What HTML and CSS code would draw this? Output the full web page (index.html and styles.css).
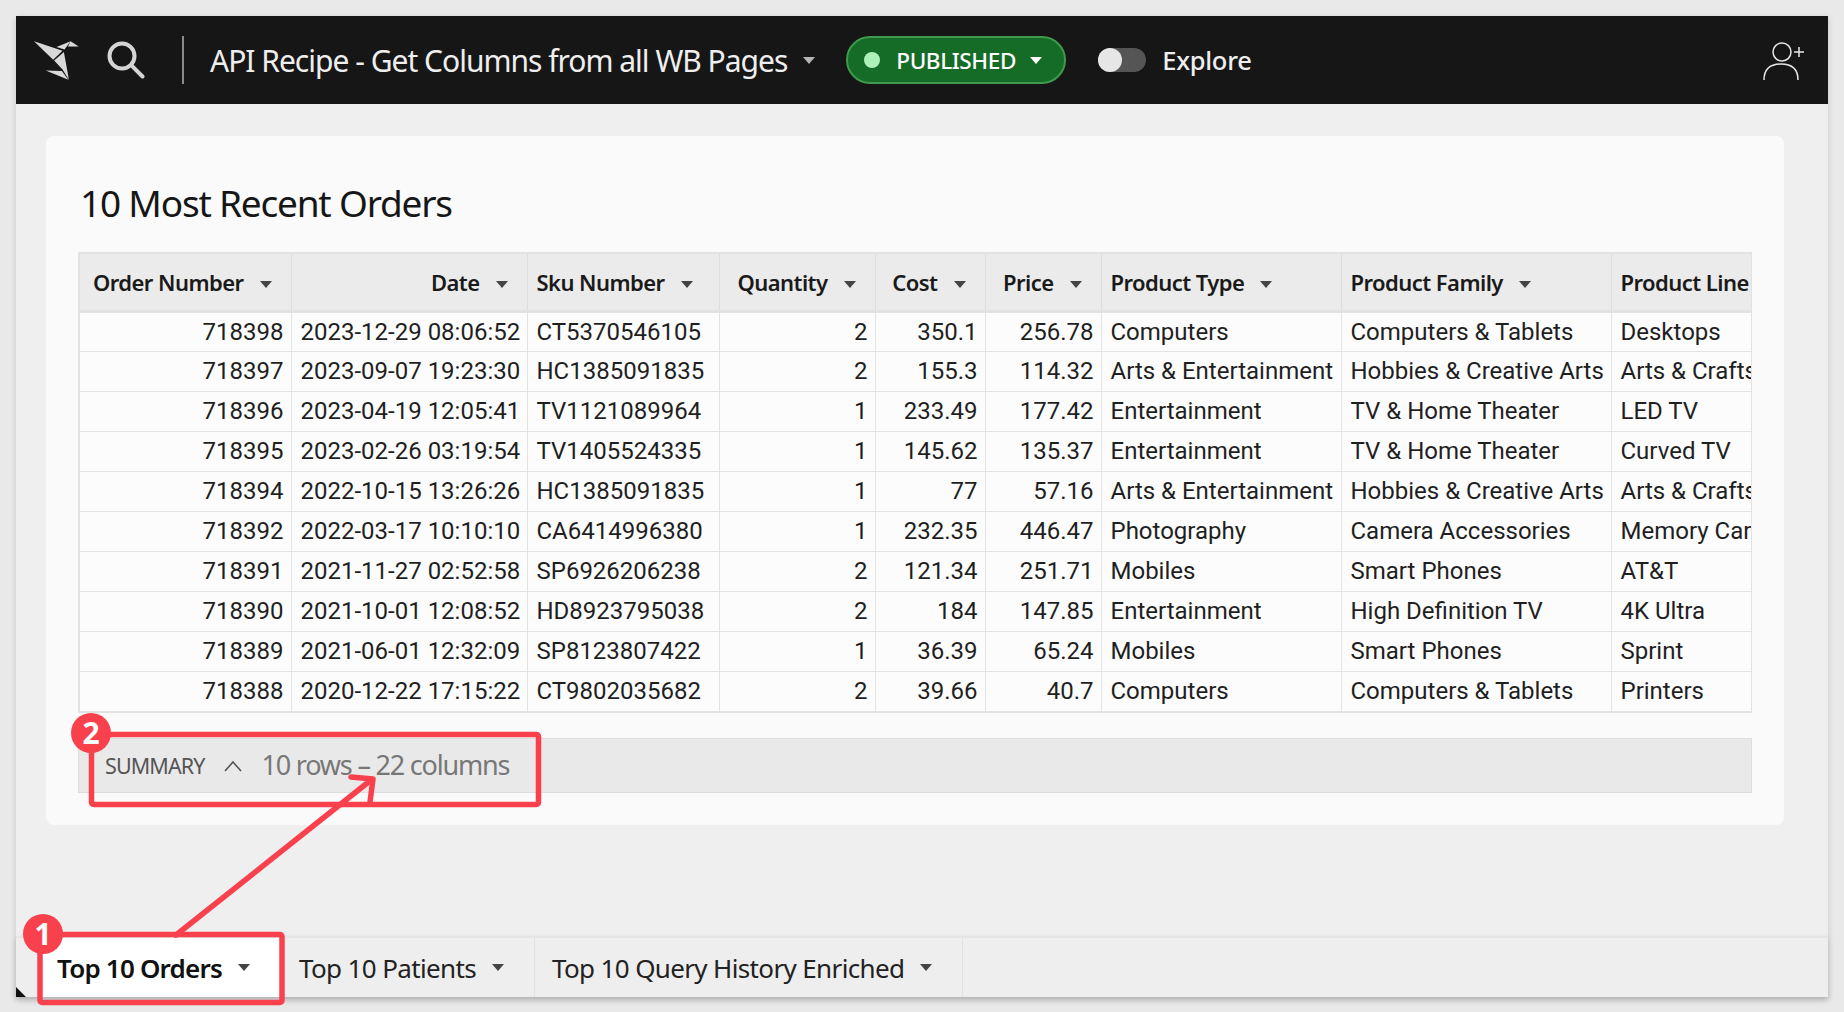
FILE: index.html
```html
<!DOCTYPE html>
<html lang="en">
<head>
    <meta charset="UTF-8">
    <meta name="viewport" content="width=device-width, initial-scale=1.0">
    <title>API Recipe - Get Columns from all WB Pages</title>
    <link rel="stylesheet" href="styles.css">
</head>
<body>
    <div class="window">
        <header class="topbar">
            <svg class="logo" width="47" height="41" viewBox="100 120 140 122">
                <polygon class="logo-fill" points="103,124 188,152 160,179"/>
                <polygon class="logo-fill" points="163,181 192,156 207,238 188,208"/>
                <polygon class="logo-fill" points="170,141 212,124 194,148"/>
                <polygon class="logo-fill" points="212,124 236,139 204,139"/>
                <polygon class="logo-fill" points="138,211 186,212 205,238"/>
            </svg>
            <svg class="search" width="40" height="40" viewBox="0 0 40 40">
                <circle cx="17" cy="15" r="12.5"/>
                <line x1="26.7" y1="24.7" x2="37.5" y2="35.5"/>
            </svg>
            <span class="divider"></span>
            <span class="doc-title">API Recipe - Get Columns from all WB Pages</span>
            <span class="caret caret-light doc-caret"></span>
            <span class="pill">
                <span class="pill-dot"></span>
                <span class="pill-text">PUBLISHED</span>
                <span class="caret caret-white"></span>
            </span>
            <span class="toggle"><span class="knob"></span></span>
            <span class="explore">Explore</span>
            <svg class="user" width="44" height="42" viewBox="0 0 44 42">
                <circle cx="20" cy="13" r="9"/>
                <path d="M2 41 C2 30 8 25 19 25 C30 25 36 30 36 41"/>
                <path d="M32 13 H42 M37 8 V18"/>
            </svg>
        </header>

        <main class="content">
            <section class="card">
                <h1>10 Most Recent Orders</h1>
                <div class="table-wrap">
                    <table>
                        <colgroup>
                            <col class="c1"><col class="c2"><col class="c3"><col class="c4"><col class="c5">
                            <col class="c6"><col class="c7"><col class="c8"><col class="c9">
                        </colgroup>
                        <thead>
                            <tr>
                                <th class="num">Order Number<span class="caret"></span></th>
                                <th class="num">Date<span class="caret"></span></th>
                                <th>Sku Number<span class="caret"></span></th>
                                <th class="num">Quantity<span class="caret"></span></th>
                                <th class="num">Cost<span class="caret"></span></th>
                                <th class="num">Price<span class="caret"></span></th>
                                <th>Product Type<span class="caret"></span></th>
                                <th>Product Family<span class="caret"></span></th>
                                <th>Product Line</th>
                            </tr>
                        </thead>
                        <tbody>
                            <tr><td class="num">718398</td><td class="num">2023-12-29 08:06:52</td><td>CT5370546105</td><td class="num">2</td><td class="num">350.1</td><td class="num">256.78</td><td>Computers</td><td>Computers &amp; Tablets</td><td>Desktops</td></tr>
                            <tr><td class="num">718397</td><td class="num">2023-09-07 19:23:30</td><td>HC1385091835</td><td class="num">2</td><td class="num">155.3</td><td class="num">114.32</td><td>Arts &amp; Entertainment</td><td>Hobbies &amp; Creative Arts</td><td>Arts &amp; Crafts</td></tr>
                            <tr><td class="num">718396</td><td class="num">2023-04-19 12:05:41</td><td>TV1121089964</td><td class="num">1</td><td class="num">233.49</td><td class="num">177.42</td><td>Entertainment</td><td>TV &amp; Home Theater</td><td>LED TV</td></tr>
                            <tr><td class="num">718395</td><td class="num">2023-02-26 03:19:54</td><td>TV1405524335</td><td class="num">1</td><td class="num">145.62</td><td class="num">135.37</td><td>Entertainment</td><td>TV &amp; Home Theater</td><td>Curved TV</td></tr>
                            <tr><td class="num">718394</td><td class="num">2022-10-15 13:26:26</td><td>HC1385091835</td><td class="num">1</td><td class="num">77</td><td class="num">57.16</td><td>Arts &amp; Entertainment</td><td>Hobbies &amp; Creative Arts</td><td>Arts &amp; Crafts</td></tr>
                            <tr><td class="num">718392</td><td class="num">2022-03-17 10:10:10</td><td>CA6414996380</td><td class="num">1</td><td class="num">232.35</td><td class="num">446.47</td><td>Photography</td><td>Camera Accessories</td><td>Memory Cards</td></tr>
                            <tr><td class="num">718391</td><td class="num">2021-11-27 02:52:58</td><td>SP6926206238</td><td class="num">2</td><td class="num">121.34</td><td class="num">251.71</td><td>Mobiles</td><td>Smart Phones</td><td>AT&amp;T</td></tr>
                            <tr><td class="num">718390</td><td class="num">2021-10-01 12:08:52</td><td>HD8923795038</td><td class="num">2</td><td class="num">184</td><td class="num">147.85</td><td>Entertainment</td><td>High Definition TV</td><td>4K Ultra</td></tr>
                            <tr><td class="num">718389</td><td class="num">2021-06-01 12:32:09</td><td>SP8123807422</td><td class="num">1</td><td class="num">36.39</td><td class="num">65.24</td><td>Mobiles</td><td>Smart Phones</td><td>Sprint</td></tr>
                            <tr><td class="num">718388</td><td class="num">2020-12-22 17:15:22</td><td>CT9802035682</td><td class="num">2</td><td class="num">39.66</td><td class="num">40.7</td><td>Computers</td><td>Computers &amp; Tablets</td><td>Printers</td></tr>
                        </tbody>
                    </table>
                </div>
                <div class="summary">
                    <span class="summary-label">SUMMARY</span>
                    <svg class="chevron" width="20" height="12" viewBox="0 0 20 12"><path d="M2 11 L10 2 L18 11"/></svg>
                    <span class="summary-count">10 rows – 22 columns</span>
                </div>
            </section>
        </main>

        <nav class="tabs">
            <div class="tab tab-active">Top 10 Orders<span class="caret"></span></div>
            <div class="tab">Top 10 Patients<span class="caret"></span></div>
            <div class="tab">Top 10 Query History Enriched<span class="caret"></span></div>
        </nav>
    </div>

    <!-- callouts drawn over the screenshot -->
    <svg class="callouts" width="1844" height="1012" viewBox="0 0 1844 1012">
        <polygon class="corner" points="16,987 16,997 26,997"/>
        <rect class="box" x="91.5" y="734.5" width="447" height="70" rx="2"/>
        <rect class="box" x="40" y="934.5" width="242" height="68" rx="2"/>
        <path class="arrow" d="M176 935 L371 780 M351 777 L373 779 L370 802"/>
        <circle class="badge" cx="91" cy="733" r="20"/>
        <text class="badge-text" x="91" y="744">2</text>
        <circle class="badge" cx="43" cy="934" r="20"/>
        <text class="badge-text" x="43" y="945">1</text>
    </svg>
</body>
</html>
```

FILE: styles.css
```css
* {
    box-sizing: border-box;
}
body {
    margin: 0;
    padding: 16px;
    height: 1012px;
    overflow: hidden;
    background-color: #e9e9e9;
    font-family: "Noto Sans", Arial, sans-serif;
    color: #1a1a1a;
}
.window {
    height: 981px;
    display: flex;
    flex-direction: column;
    background-color: #efefef;
    box-shadow: 0 2px 6px rgba(0, 0, 0, 0.15);
}

/* top bar */
.topbar {
    height: 88px;
    flex: none;
    display: flex;
    align-items: center;
    background-color: #161616;
    color: #eeeeee;
}
.logo {
    margin-left: 17px;
}
.logo-fill {
    fill: #d9d9d9;
}
.search {
    margin-left: 25px;
    margin-top: 2px;
}
.search circle,
.search line {
    fill: none;
    stroke: #d4d4d4;
    stroke-width: 4;
    stroke-linecap: round;
}
.divider {
    width: 2px;
    height: 48px;
    margin-left: 37px;
    background-color: #8a8a8a;
}
.doc-title {
    margin-left: 26px;
    font-size: 30px;
    letter-spacing: -1px;
    white-space: nowrap;
}
.doc-caret {
    margin-left: 15px;
}
.pill {
    height: 48px;
    width: 220px;
    margin-left: 31px;
    display: flex;
    align-items: center;
    padding-left: 16px;
    background-color: #146c26;
    border: 2px solid #3f9a4d;
    border-radius: 24px;
}
.pill-dot {
    width: 16px;
    height: 16px;
    border-radius: 50%;
    background-color: #aef0ba;
}
.pill-text {
    margin-left: 16px;
    font-size: 22.5px;
    font-weight: 500;
    letter-spacing: -0.4px;
    color: #ffffff;
}
.pill .caret {
    margin-left: 14px;
}
.toggle {
    width: 48px;
    height: 24px;
    margin-left: 32px;
    background-color: #555555;
    border-radius: 12px;
}
.knob {
    display: block;
    width: 24px;
    height: 24px;
    border-radius: 50%;
    background-color: #e6e6e6;
}
.explore {
    margin-left: 16px;
    font-size: 25.5px;
    font-weight: 500;
    letter-spacing: -0.3px;
}
.user {
    margin-left: auto;
    margin-right: 22px;
}
.user circle,
.user path {
    fill: none;
    stroke: #e6e6e6;
    stroke-width: 1.5;
}

/* carets */
.caret {
    display: inline-block;
    width: 0;
    height: 0;
    margin-left: 16px;
    vertical-align: middle;
    border-left: 6.5px solid transparent;
    border-right: 6.5px solid transparent;
    border-top: 7px solid #444444;
}
.caret-light {
    flex: none;
    border-top-color: #b5b5b5;
}
.caret-white {
    flex: none;
    border-top-color: #ffffff;
}

/* main card */
.content {
    flex: 1;
    padding: 32px 44px 0 30px;
}
.card {
    height: 689px;
    padding: 0 32px;
    background-color: #fafafa;
    border-radius: 8px;
}
h1 {
    margin: 0;
    padding: 40px 0 0 2px;
    height: 116px;
    font-size: 37px;
    font-weight: 400;
    line-height: 54px;
    letter-spacing: -1.2px;
    color: #161616;
}
.table-wrap {
    width: 1674px;
    height: 461px;
    overflow: hidden;
    border: 2px solid #e2e2e2;
    border-right-width: 1px;
}
table {
    width: 1700px;
    table-layout: fixed;
    border-collapse: collapse;
}
.c1 { width: 211px; }
.c2 { width: 236px; }
.c3 { width: 192px; }
.c4 { width: 156px; }
.c5 { width: 110px; }
.c6 { width: 116px; }
.c7 { width: 240px; }
.c8 { width: 270px; }
.c9 { width: 169px; }
th {
    height: 57px;
    padding: 0 17px 0 9px;
    text-align: left;
    font-size: 22px;
    font-weight: 600;
    letter-spacing: -0.55px;
    white-space: nowrap;
    overflow: hidden;
    background-color: #ebebeb;
    border-right: 1px solid #dedede;
    border-bottom: 3px solid #e2e2e2;
}
td {
    height: 40px;
    padding: 0 7px 0 9px;
    font-family: Roboto, Arial, sans-serif;
    font-size: 24px;
    color: #1f1f1f;
    white-space: nowrap;
    overflow: hidden;
    background-color: #fcfcfc;
    border-right: 1px solid #e4e4e4;
    border-bottom: 1px solid #e4e4e4;
}
th.num,
td.num {
    text-align: right;
}
th.num {
    padding-right: 19px;
}
.summary {
    width: 1674px;
    height: 55px;
    margin-top: 25px;
    display: flex;
    align-items: center;
    padding-left: 26px;
    background-color: #e9e9e9;
    border: 1px solid #dddddd;
}
.summary-label {
    font-size: 21.5px;
    letter-spacing: -0.9px;
    color: #555555;
}
.chevron {
    margin-left: 18px;
}
.chevron path {
    fill: none;
    stroke: #555555;
    stroke-width: 1.6;
}
.summary-count {
    margin-left: 19px;
    font-size: 27px;
    letter-spacing: -1.2px;
    line-height: 32px;
    margin-bottom: 2px;
    color: #777777;
}

/* bottom tabs */
.tabs {
    height: 61px;
    flex: none;
    display: flex;
    padding-left: 24px;
    background-color: #eeeeee;
    border-top: 2px solid #e4e4e4;
    box-shadow: 0 3px 6px rgba(0, 0, 0, 0.15);
}
.tab {
    display: flex;
    align-items: center;
    padding: 0 30px 0 17px;
    font-size: 26px;
    letter-spacing: -0.64px;
    white-space: nowrap;
    color: #222222;
    border-right: 1px solid #e2e2e2;
}
.tab-active {
    width: 242px;
    font-weight: 600;
    letter-spacing: -0.8px;
    color: #111111;
    background-color: #ffffff;
}

/* callouts */
.callouts {
    position: absolute;
    top: 0;
    left: 0;
}
.corner {
    fill: #111111;
}
.box,
.arrow {
    fill: none;
    stroke: #f9404d;
    stroke-width: 5.5;
    stroke-linejoin: round;
    stroke-linecap: round;
}
.badge {
    fill: #f9404d;
}
.badge-text {
    font-family: "Noto Sans", Arial, sans-serif;
    font-size: 30px;
    font-weight: 700;
    text-anchor: middle;
    fill: #ffffff;
}
```
